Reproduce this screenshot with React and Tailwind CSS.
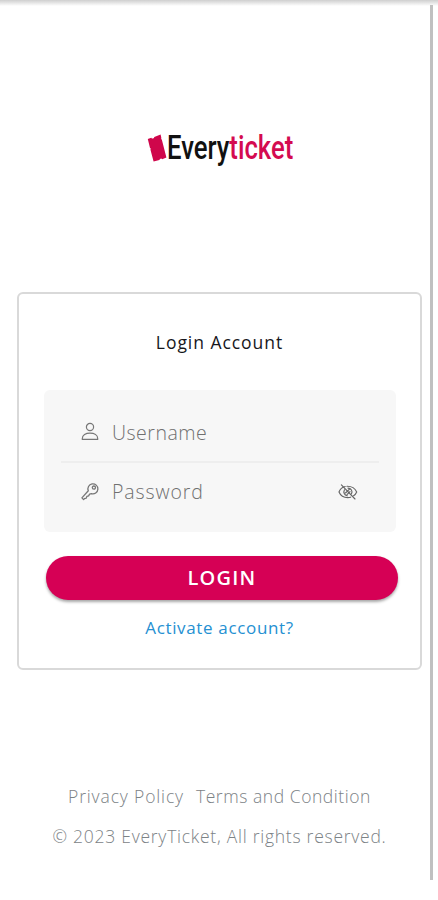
import React, { useState } from "react";

const UserIcon = () => (
  <svg className="h-5 w-[18px] shrink-0 text-[#777]" viewBox="0 0 18 20" fill="none" stroke="currentColor" strokeWidth="1.2">
    <circle cx="9" cy="5" r="3.6" />
    <path d="M1.3 17.4v-1c0-3.2 3.4-5.2 7.7-5.2s7.7 2 7.7 5.2v1z" strokeLinejoin="round" />
  </svg>
);

const KeyIcon = () => (
  <svg className="h-5 w-[18px] shrink-0 text-[#777]" viewBox="0 0 18 20" fill="none" stroke="currentColor" strokeWidth="1.3" strokeLinejoin="round">
    <path d="M7.3 8.8A5 5 0 1 1 10.4 11.6L8.6 12.1 7.6 13.9 5.9 14.4 5.3 16.1 3.4 16.6 2.6 17.6 0.9 15.9z" />
    <circle cx="12.9" cy="5.6" r="1.6" />
  </svg>
);

const EyeOffIcon = () => (
  <svg className="h-[18px] w-5" viewBox="0 0 20 18" fill="none" stroke="currentColor" strokeWidth="1.15" strokeLinecap="round">
    <path d="M7.2 3.5C4 4.3 1.9 6.6 1 9c1.4 3.3 4.7 5.6 8.8 5.6 1.1 0 2-.1 2.8-.4M9 3.3c4.5-.1 8 2 9.7 5.7-.7 1.6-1.7 2.9-3.1 3.8" />
    <path d="M6.5 6.8c-1.4 2.4-.2 5.4 2.7 6M10 5.1c3.2 0 4.8 3.3 3.5 5.7" />
    <path d="M3.4 1.8 17 16M7.5 10l4-3.9M9 11.7l3-3" />
  </svg>
);

function Logo() {
  return (
    <div className="flex h-12 items-center pl-[6px]">
      <svg className="h-12 w-[20px] shrink-0" viewBox="0 0 20 48">
        <path
          d="M.8 15 4.3 13.7a1.6 1.6 0 0 0 3-.6L13.6 10.6 14.4 14.2l-.4.8.8.6L19.4 33.6 15.2 35.2a1.6 1.6 0 0 0-2.8 .8L6.6 37.6 3.4 25.6l.5-.9-.9-.7z"
          fill="#cf064b"
        />
      </svg>
      <div className="mb-[2px] h-10 w-[130px]">
        <div className="flex w-max origin-left scale-x-[0.755] font-['Roboto',sans-serif] text-[34px] leading-10 font-medium">
          <span className="text-[#111]">Every</span>
          <span className="text-[#d40b50]">ticket</span>
        </div>
      </div>
    </div>
  );
}

export default function App() {
  const [username, setUsername] = useState("");
  const [password, setPassword] = useState("");
  const [visible, setVisible] = useState(false);

  return (
    <div className="relative h-[900px] w-[438px] overflow-hidden bg-white font-['Open_Sans','Noto_Sans',sans-serif]">
      <div className="h-[6px] bg-gradient-to-b from-[#cfcfcf] to-white" />
      {/* Scroll indicator */}
      <div className="absolute top-[5px] right-[5px] h-[875px] w-[3px] bg-[#c0c0c0]" />

      <header className="flex justify-center pt-[118px]">
        <Logo />
      </header>

      <main className="mt-[120px] ml-[17px] h-[378px] w-[405px] rounded-[6px] border-2 border-[#d9d9d9] px-[25px] pt-[36px]">
        <h1 className="text-center text-[17.5px] leading-6 tracking-[0.95px] text-[#17171c]">Login Account</h1>

        <form className="mt-[36px]" onSubmit={(e) => e.preventDefault()}>
          <div className="h-[142px] w-[352px] rounded-[6px] bg-[#f7f7f7] px-[17px] pt-[13px]">
            <label className="flex h-[60px] items-center border-b-2 border-[#eeeeee] pl-5">
              <UserIcon />
              <input
                value={username}
                onChange={(e) => setUsername(e.target.value)}
                placeholder="Username"
                className="ml-[13px] w-[210px] bg-transparent pt-px text-[19.5px] font-light tracking-[0.5px] outline-none placeholder:text-[#707070]"
              />
            </label>
            <div className="flex h-[57px] items-center pl-5">
              <KeyIcon />
              <input
                type={visible ? "text" : "password"}
                value={password}
                onChange={(e) => setPassword(e.target.value)}
                placeholder="Password"
                className="ml-[13px] w-[210px] bg-transparent text-[19.5px] font-light tracking-[0.9px] outline-none placeholder:text-[#707070]"
              />
              <button type="button" onClick={() => setVisible(!visible)} className="ml-[16px] text-[#666]">
                <EyeOffIcon />
              </button>
            </div>
          </div>

          <button className="mt-6 ml-[2px] h-11 w-[352px] rounded-full bg-[#d60055] text-[20px] font-semibold tracking-[1.2px] text-white shadow-[0_2px_3px_rgba(0,0,0,0.35)]">
            LOGIN
          </button>
        </form>

        <a href="#" className="mt-[16px] block text-center text-[17px] leading-6 tracking-[0.65px] text-[#2590d2]">
          Activate account?
        </a>
      </main>

      <footer className="mt-[114px] pl-px text-center text-[17.5px] leading-6 font-light text-[#7c8286]">
        <div className="flex justify-center gap-[12px]">
          <a href="#" className="tracking-[0.85px]">Privacy Policy</a>
          <a href="#" className="tracking-[0.55px]">Terms and Condition</a>
        </div>
        <p className="mt-[16px] tracking-[0.74px]">© 2023 EveryTicket, All rights reserved.</p>
      </footer>
    </div>
  );
}
